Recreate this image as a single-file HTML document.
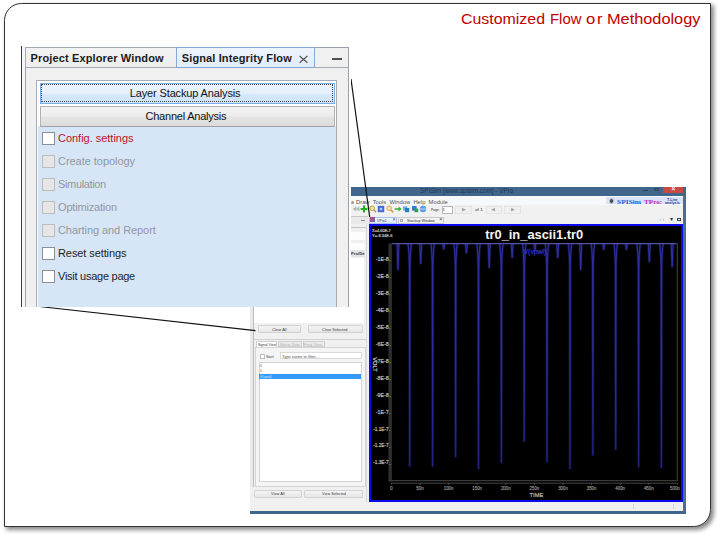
<!DOCTYPE html>
<html lang="en">
<head>
<meta charset="utf-8">
<title>Customized Flow or Methodology</title>
<style>
html,body{margin:0;padding:0;background:#fff;}
body{width:720px;height:536px;position:relative;overflow:hidden;font-family:"Liberation Sans",sans-serif;}
.abs{position:absolute;}
#frame{position:absolute;left:3.5px;top:2.8px;width:707.8px;height:524.4px;box-sizing:border-box;border:1.35px solid #333;border-radius:17.5px 0 17.5px 0;background:#fff;box-shadow:2.5px 2.5px 4px rgba(0,0,0,.46);}
#title{position:absolute;left:0;top:8.6px;width:720px;height:20px;font-size:15.1px;line-height:20px;color:#c00000;white-space:nowrap;}
#title span{position:absolute;top:0;transform-origin:0 0;}
/* ---------- screenshot window ---------- */
#shot{position:absolute;left:250px;top:187px;width:436px;height:326.6px;background:#f0f0f0;overflow:hidden;}
#shot .t{position:absolute;white-space:nowrap;line-height:1;}
/* ---------- swing panel ---------- */
#panel{position:absolute;left:21px;top:45.6px;width:330px;height:261px;background:#fff;overflow:hidden;}
#panel .lbl{position:absolute;left:37px;font-size:11px;line-height:13px;white-space:nowrap;color:#1e1e1e;}
#panel .cb{position:absolute;left:21px;width:13px;height:13px;box-sizing:border-box;border:1px solid #8e8f8f;background:#fff;}
#panel .cb.dis{border-color:#bcbcbc;background:#e6e6e6;}
#panel .dis{color:#92979f;}
.btn{position:absolute;left:18.5px;width:295px;box-sizing:border-box;border:1px solid #b2b2b2;border-bottom-color:#a0a0a0;background:linear-gradient(#f3f3f3,#ececec 48%,#e4e4e4 52%,#dcdcdc);font-size:11px;text-align:center;color:#111;white-space:nowrap;}
</style>
</head>
<body>
<div id="frame"></div>
<div id="title"><span style="left:461.2px;transform:translateY(-.5px) scaleX(1.054)">Customized</span> <span style="left:550px;transform:translateY(-.5px) scaleX(.985)">Flow</span> <span style="left:585.6px;letter-spacing:1.6px;transform:translateY(-.5px) scaleX(1.1)">or</span> <span style="left:607.3px;transform:translateY(-.5px) scaleX(1.081)">Methodology</span></div>

<div id="shot">
<div class="abs" style="left:0.0px;top:0.0px;width:436.0px;height:326.0px;background:#f0f0f0"></div>
<div class="abs" style="left:0.0px;top:0.0px;width:436.0px;height:9.4px;background:#41668c"></div>
<svg class="abs" style="left:169.5px;top:0.4px;overflow:visible" width="93.3" height="9.0"><text x="0" y="6.40" font-size="6.4" textLength="93.3" lengthAdjust="spacingAndGlyphs" fill="#213a56" >SPISim [www.spisim.com] - VPro</text></svg>
<div class="abs" style="left:413.2px;top:0.0px;width:20.3px;height:5.8px;background:#c84a45"></div>
<div class="t" style="left:421.4px;top:-1.4px;font-size:6.4px;color:#fff;font-weight:bold">×</div>
<div class="abs" style="left:393.0px;top:3.4px;width:4.6px;height:0.9px;background:#27405c"></div>
<div class="abs" style="left:404.2px;top:0.6px;width:5.0px;height:3.4px;border:0.7px solid #2d4866;box-sizing:border-box"></div>
<div class="abs" style="left:0.0px;top:9.4px;width:433.0px;height:8.3px;background:#f7f8f9"></div>
<svg class="abs" style="left:101.4px;top:10.8px;overflow:visible" width="2.8" height="8.0"><text x="0" y="5.70" font-size="5.7" textLength="2.8" lengthAdjust="spacingAndGlyphs" fill="#505050" >a</text></svg>
<svg class="abs" style="left:106.3px;top:10.8px;overflow:visible" width="91.7" height="8.0"><text x="0" y="5.70" font-size="5.7" textLength="91.7" lengthAdjust="spacingAndGlyphs" fill="#505050" xml:space="preserve">Draw&#160; Tools&#160; Window&#160; Help&#160; Module</text></svg>
<div class="abs" style="left:356.0px;top:10.3px;width:76.8px;height:7.2px;background:#dae3f8"></div>
<div class="abs" style="left:358.6px;top:11.1px;width:5.6px;height:5.6px;border-radius:50%;background:#4a5058;border:1px solid #c8ccd4;box-sizing:border-box"></div>
<svg class="abs" style="left:366.9px;top:9.8px;overflow:visible" width="24.1" height="9.2"><text x="0" y="6.60" font-size="6.6" textLength="24.1" lengthAdjust="spacingAndGlyphs" fill="#2f58d8" font-weight="bold" font-family="Liberation Serif, serif">SPISim</text></svg>
<svg class="abs" style="left:393.8px;top:9.7px;overflow:visible" width="18.2" height="9.5"><text x="0" y="6.80" font-size="6.8" textLength="18.2" lengthAdjust="spacingAndGlyphs" fill="#c31fb0" font-weight="bold" font-family="Liberation Serif, serif">TPro:</text></svg>
<svg class="abs" style="left:417.4px;top:10.1px;overflow:visible" width="10.6" height="4.9"><text x="0" y="3.50" font-size="3.5" textLength="10.6" lengthAdjust="spacingAndGlyphs" fill="#2a3a9a" font-weight="bold">T-Line</text></svg>
<svg class="abs" style="left:415.2px;top:13.3px;overflow:visible" width="14.8" height="4.9"><text x="0" y="3.50" font-size="3.5" textLength="14.8" lengthAdjust="spacingAndGlyphs" fill="#2a3a9a" font-weight="bold">analysis</text></svg>
<div class="abs" style="left:0.0px;top:17.7px;width:433.0px;height:11.0px;background:#f1f1f1"></div>
<svg class="abs" style="left:101.8px;top:18.3px" width="8" height="8" viewBox="0 0 8 8"><path d="M4.2 1.5 L.8 4 L4.2 6.5 Z M7.4 1.5 L4 4 L7.4 6.5 Z" fill="#a9bda9"/></svg>
<svg class="abs" style="left:109.8px;top:18.3px" width="8" height="8" viewBox="0 0 8 8"><path d="M3 .6 h2 v2.4 h2.4 v2 h-2.4 v2.4 h-2 v-2.4 h-2.4 v-2 h2.4 Z" fill="#1db31d"/></svg>
<svg class="abs" style="left:118.5px;top:18.3px" width="8" height="8" viewBox="0 0 8 8"><circle cx="3.2" cy="3.2" r="2.3" fill="#f0e6a8" stroke="#b89a30" stroke-width=".9"/><path d="M5 5 L7.2 7.2" stroke="#c8902a" stroke-width="1.3"/></svg>
<svg class="abs" style="left:126.8px;top:18.3px" width="8" height="8" viewBox="0 0 8 8"><rect x=".8" y=".8" width="6.4" height="6.4" fill="#3c6ad8"/><rect x="2.8" y="2.8" width="2.4" height="2.4" fill="#b8ccf4"/></svg>
<svg class="abs" style="left:135.5px;top:18.3px" width="8" height="8" viewBox="0 0 8 8"><circle cx="3.2" cy="3.2" r="2.3" fill="#f6e2c0" stroke="#e0a040" stroke-width=".9"/><path d="M5 5 L7.2 7.2" stroke="#d88a2a" stroke-width="1.3"/></svg>
<svg class="abs" style="left:143.5px;top:18.3px" width="8" height="8" viewBox="0 0 8 8"><path d="M.6 3.2 h4 v-1.6 L7.6 4 L4.6 6.4 v-1.6 h-4 Z" fill="#35b035"/></svg>
<svg class="abs" style="left:152.2px;top:18.3px" width="8" height="8" viewBox="0 0 8 8"><rect x="1" y="1.4" width="4.2" height="4.2" fill="#6ab0ec"/><rect x="3" y="3" width="4.2" height="4.2" fill="#2a78d0"/></svg>
<svg class="abs" style="left:160.5px;top:18.3px" width="8" height="8" viewBox="0 0 8 8"><rect x="1" y="1" width="4.6" height="4.6" fill="#3a78c8"/><rect x="3.4" y="3.6" width="3.8" height="3.6" fill="#2aa05a"/></svg>
<svg class="abs" style="left:169.0px;top:18.3px" width="8" height="8" viewBox="0 0 8 8"><circle cx="4" cy="4" r="3.2" fill="#5a9ce0"/><path d="M1 4 h6" stroke="#d8e8f8" stroke-width=".8"/></svg>
<svg class="abs" style="left:181.0px;top:19.8px;overflow:visible" width="8.3" height="5.9"><text x="0" y="4.20" font-size="4.2" textLength="8.3" lengthAdjust="spacingAndGlyphs" fill="#222" >Page:</text></svg>
<div class="abs" style="left:191.5px;top:18.6px;width:11.0px;height:8.2px;background:#fff;border:.6px solid #b8b8b8;box-sizing:border-box"></div>
<div class="t" style="left:192.6px;top:20.8px;font-size:4.4px;color:#333;">1</div>
<div class="abs" style="left:205.0px;top:18.6px;width:17.0px;height:8.2px;background:#f0f0f0;border:.5px solid #e4e4e4;box-sizing:border-box"></div>
<div class="t" style="left:211.5px;top:20.5px;font-size:4.6px;color:#a4a4a4;">▶</div>
<svg class="abs" style="left:225.0px;top:19.9px;overflow:visible" width="7.7" height="6.0"><text x="0" y="4.30" font-size="4.3" textLength="7.7" lengthAdjust="spacingAndGlyphs" fill="#333" >of 1</text></svg>
<div class="abs" style="left:235.5px;top:18.6px;width:16.0px;height:8.2px;background:#f0f0f0;border:.5px solid #e4e4e4;box-sizing:border-box"></div>
<div class="t" style="left:240.8px;top:20.5px;font-size:4.6px;color:#a4a4a4;">◀</div>
<div class="abs" style="left:254.0px;top:18.6px;width:17.0px;height:8.2px;background:#f0f0f0;border:.5px solid #e4e4e4;box-sizing:border-box"></div>
<div class="t" style="left:260.5px;top:20.5px;font-size:4.6px;color:#a4a4a4;">▶</div>
<div class="abs" style="left:0.0px;top:28.7px;width:433.0px;height:8.0px;background:#f0f0f0"></div>
<div class="abs" style="left:101.0px;top:29.2px;width:16.5px;height:7.0px;background:#e9e9e9;border-top:.6px solid #c8c8c8"></div>
<div class="abs" style="left:111.2px;top:33.0px;width:3.6px;height:0.7px;background:#909090"></div>
<div class="abs" style="left:119.2px;top:29.6px;width:28.2px;height:7.0px;background:linear-gradient(#f2f7fd,#dbe8f8);border:.6px solid #a9c4e4;box-sizing:border-box"></div>
<div class="abs" style="left:120.3px;top:30.2px;width:4.8px;height:4.8px;background:linear-gradient(135deg,#d04860,#5a70d0)"></div>
<svg class="abs" style="left:127.0px;top:30.5px;overflow:visible" width="9.7" height="6.0"><text x="0" y="4.30" font-size="4.3" textLength="9.7" lengthAdjust="spacingAndGlyphs" fill="#3a3a3a" >VPro1</text></svg>
<div class="t" style="left:142.6px;top:30.4px;font-size:5.2px;color:#444;">×</div>
<div class="abs" style="left:147.6px;top:29.6px;width:46.4px;height:7.0px;background:#f3f3f3;border:.6px solid #c9c9c9;box-sizing:border-box"></div>
<div class="abs" style="left:149.6px;top:31.6px;width:3.0px;height:3.0px;border:.6px solid #aaa;box-sizing:border-box"></div>
<svg class="abs" style="left:156.8px;top:30.5px;overflow:visible" width="27.8" height="6.0"><text x="0" y="4.30" font-size="4.3" textLength="27.8" lengthAdjust="spacingAndGlyphs" fill="#2e2e2e" >Stackup Window</text></svg>
<div class="t" style="left:189.2px;top:30.4px;font-size:5.2px;color:#444;">×</div>
<div class="t" style="left:409.5px;top:30.2px;font-size:5px;color:#aaa;">‹ ›</div>
<div class="t" style="left:420.4px;top:29.6px;font-size:5.6px;color:#333;">▾</div>
<div class="abs" style="left:426.6px;top:30.8px;width:4.4px;height:3.4px;border:.6px solid #444;border-top-width:1.2px;box-sizing:border-box"></div>
<div class="abs" style="left:0.0px;top:36.5px;width:118.5px;height:279.0px;background:#f0f0f0"></div>
<div class="abs" style="left:0.0px;top:36.5px;width:4.4px;height:263.0px;background:#e9e9e9"></div>
<div class="abs" style="left:3.4px;top:36.5px;width:1.0px;height:263.0px;background:#bcbcbc"></div>
<div class="abs" style="left:101.0px;top:39.6px;width:16.0px;height:0.7px;background:#c4c4c4"></div>
<div class="abs" style="left:101.0px;top:45.0px;width:14.0px;height:8.0px;background:#fdfdfd"></div>
<div class="abs" style="left:101.0px;top:56.0px;width:14.0px;height:7.4px;background:#fdfdfd"></div>
<div class="abs" style="left:101.0px;top:63.4px;width:14.0px;height:6.2px;background:#e3e3e3"></div>
<svg class="abs" style="left:101.0px;top:63.9px;overflow:visible" width="13.5" height="6.2"><text x="0" y="4.40" font-size="4.4" textLength="13.5" lengthAdjust="spacingAndGlyphs" fill="#333" font-weight="bold">Pro/De</text></svg>
<div class="abs" style="left:4.4px;top:71.0px;width:109.6px;height:65.3px;background:#fff"></div>
<div class="abs" style="left:116.2px;top:37.0px;width:1.0px;height:278.0px;background:#d9d9d9"></div>
<div class="abs" style="left:8.3px;top:138.3px;width:42.5px;height:7.6px;background:linear-gradient(#f4f4f4,#e6e6e6);border:.7px solid #d2d2d2;box-sizing:border-box;border-radius:1px"></div>
<svg class="abs" style="left:22.0px;top:139.7px;overflow:visible" width="14.6" height="6.0"><text x="0" y="4.30" font-size="4.3" textLength="14.6" lengthAdjust="spacingAndGlyphs" fill="#3a3a3a" >Clear All</text></svg>
<div class="abs" style="left:58.0px;top:138.3px;width:55.0px;height:7.6px;background:linear-gradient(#f4f4f4,#e6e6e6);border:.7px solid #d2d2d2;box-sizing:border-box;border-radius:1px"></div>
<svg class="abs" style="left:72.3px;top:139.7px;overflow:visible" width="25.5" height="6.0"><text x="0" y="4.30" font-size="4.3" textLength="25.5" lengthAdjust="spacingAndGlyphs" fill="#3a3a3a" >Clear Selected</text></svg>
<div class="abs" style="left:4.0px;top:151.6px;width:113.0px;height:0.8px;background:#cfcfcf"></div>
<div class="abs" style="left:5.6px;top:153.6px;width:21.6px;height:7.0px;background:#fff;border:.6px solid #d0d0d0;border-bottom:0;box-sizing:border-box"></div>
<svg class="abs" style="left:7.6px;top:154.5px;overflow:visible" width="18.0" height="5.5"><text x="0" y="3.90" font-size="3.9" textLength="18.0" lengthAdjust="spacingAndGlyphs" fill="#333" >Signal View</text></svg>
<div class="abs" style="left:27.8px;top:154.2px;width:24.4px;height:6.0px;background:#eaeaea;border:.6px solid #d0d0d0;box-sizing:border-box"></div>
<svg class="abs" style="left:30.2px;top:154.7px;overflow:visible" width="19.8" height="5.5"><text x="0" y="3.90" font-size="3.9" textLength="19.8" lengthAdjust="spacingAndGlyphs" fill="#b4b4b4" >Matrix View</text></svg>
<div class="abs" style="left:52.6px;top:154.2px;width:22.0px;height:6.0px;background:#eaeaea;border:.6px solid #d0d0d0;box-sizing:border-box"></div>
<svg class="abs" style="left:54.0px;top:154.7px;overflow:visible" width="18.0" height="5.5"><text x="0" y="3.90" font-size="3.9" textLength="18.0" lengthAdjust="spacingAndGlyphs" fill="#b4b4b4" >Freq. View</text></svg>
<div class="abs" style="left:4.6px;top:160.2px;width:111.6px;height:139.6px;background:#f4f4f4;border:.7px solid #d4d4d4;box-sizing:border-box"></div>
<div class="abs" style="left:10.0px;top:167.0px;width:5.2px;height:5.2px;background:#fff;border:.6px solid #bdbdbd;box-sizing:border-box"></div>
<svg class="abs" style="left:16.0px;top:167.1px;overflow:visible" width="7.7" height="6.0"><text x="0" y="4.30" font-size="4.3" textLength="7.7" lengthAdjust="spacingAndGlyphs" fill="#444" >Sort</text></svg>
<div class="abs" style="left:30.0px;top:165.4px;width:81.5px;height:6.8px;background:#fff;border:.6px solid #dadada;box-sizing:border-box"></div>
<svg class="abs" style="left:31.6px;top:166.5px;overflow:visible" width="36.9" height="5.9"><text x="0" y="4.20" font-size="4.2" textLength="36.9" lengthAdjust="spacingAndGlyphs" fill="#555" >Type name to filter...</text></svg>
<div class="abs" style="left:8.6px;top:175.2px;width:103.2px;height:120.2px;background:#fff;border:.7px solid #d4d4d4;box-sizing:border-box"></div>
<div class="t" style="left:9.8px;top:176.6px;font-size:4.2px;color:#666;">0</div>
<div class="t" style="left:9.8px;top:182.0px;font-size:4.2px;color:#666;">1</div>
<div class="abs" style="left:9.2px;top:186.9px;width:102.0px;height:5.6px;background:#3399ff"></div>
<svg class="abs" style="left:9.6px;top:187.1px;overflow:visible" width="11.8" height="5.9"><text x="0" y="4.20" font-size="4.2" textLength="11.8" lengthAdjust="spacingAndGlyphs" fill="#d4e8ff" >V(vpwl)</text></svg>
<div class="abs" style="left:4.2px;top:303.0px;width:47.6px;height:7.5px;background:linear-gradient(#f4f4f4,#e6e6e6);border:.7px solid #d2d2d2;box-sizing:border-box;border-radius:1px"></div>
<svg class="abs" style="left:21.3px;top:304.4px;overflow:visible" width="13.7" height="6.0"><text x="0" y="4.30" font-size="4.3" textLength="13.7" lengthAdjust="spacingAndGlyphs" fill="#3a3a3a" >View All</text></svg>
<div class="abs" style="left:54.2px;top:303.0px;width:58.8px;height:7.5px;background:linear-gradient(#f4f4f4,#e6e6e6);border:.7px solid #d2d2d2;box-sizing:border-box;border-radius:1px"></div>
<svg class="abs" style="left:71.8px;top:304.4px;overflow:visible" width="23.9" height="6.0"><text x="0" y="4.30" font-size="4.3" textLength="23.9" lengthAdjust="spacingAndGlyphs" fill="#3a3a3a" >View Selected</text></svg>
<div class="abs" style="left:118.6px;top:36.6px;width:314.0px;height:278.6px;background:#000;border:2px solid #0a0aee;box-sizing:border-box"></div>
<svg class="abs" style="left:118.6px;top:36.6px" width="314" height="278.6" viewBox="368.6 223.6 314 278.6" font-family="Liberation Sans, sans-serif">
<g fill="none">
<rect x="388" y="243" width="3.5" height="238" fill="#2e2e2e"/>
<path d="M388.4 480.3 H676.9 V243" stroke="#3a3a3a" stroke-width="1.2"/>
<path d="M391 482.8 H676.5" stroke="#4c4c4c" stroke-width=".9"/>
</g>
<path d="M391.5 243.2 H676.4" stroke="#55559c" stroke-width="1.2" fill="none"/>
<defs><filter id="bl" x="-5%" y="-5%" width="110%" height="110%"><feGaussianBlur stdDeviation="0.75"/></filter></defs>
<defs><linearGradient id="sg" gradientUnits="userSpaceOnUse" x1="0" y1="243" x2="0" y2="470"><stop offset="0" stop-color="#4040e0"/><stop offset=".5" stop-color="#3c3cd8"/><stop offset="1" stop-color="#3030b0"/></linearGradient></defs>
<defs><path id="spk" d="M407.6 243.6 C408.30 248 408.70 254 409.00 266 L409.20 465.5 L409.40 465.5 L409.60 266 C409.90 254 410.30 248 411.0 243.6 M430.5 243.6 C431.20 248 431.60 254 431.90 266 L432.10 465.5 L432.30 465.5 L432.50 266 C432.80 254 433.20 248 433.9 243.6 M453.5 243.6 C454.20 248 454.60 254 454.90 266 L455.10 456.0 L455.30 456.0 L455.50 266 C455.80 254 456.20 248 456.9 243.6 M476.4 243.6 C477.10 248 477.50 254 477.80 266 L478.00 468.0 L478.20 468.0 L478.40 266 C478.70 254 479.10 248 479.8 243.6 M499.3 243.6 C500.00 248 500.40 254 500.70 266 L500.90 462.0 L501.10 462.0 L501.30 266 C501.60 254 502.00 248 502.7 243.6 M522.1 243.6 C522.80 248 523.20 254 523.50 266 L523.70 440.5 L523.90 440.5 L524.10 266 C524.40 254 524.80 248 525.5 243.6 M544.9 243.6 C545.60 248 546.00 254 546.30 266 L546.50 461.0 L546.70 461.0 L546.90 266 C547.20 254 547.60 248 548.3 243.6 M567.9 243.6 C568.60 248 569.00 254 569.30 266 L569.50 468.0 L569.70 468.0 L569.90 266 C570.20 254 570.60 248 571.3 243.6 M590.8 243.6 C591.50 248 591.90 254 592.20 266 L592.40 454.5 L592.60 454.5 L592.80 266 C593.10 254 593.50 248 594.2 243.6 M613.6 243.6 C614.30 248 614.70 254 615.00 266 L615.20 448.8 L615.40 448.8 L615.60 266 C615.90 254 616.30 248 617.0 243.6 M636.5 243.6 C637.20 248 637.60 254 637.90 266 L638.10 466.0 L638.30 466.0 L638.50 266 C638.80 254 639.20 248 639.9 243.6 M659.3 243.6 C660.00 248 660.40 254 660.70 266 L660.90 467.0 L661.10 467.0 L661.30 266 C661.60 254 662.00 248 662.7 243.6 M396.7 243.6 L397.50 269.0 L397.70 269.0 L398.5 243.6 M419.4 243.6 L420.20 263.0 L420.40 263.0 L421.2 243.6 M442.4 243.6 L443.20 248.7 L443.40 248.7 L444.2 243.6 M465.1 243.6 L465.90 252.4 L466.10 252.4 L466.9 243.6 M487.9 243.6 L488.70 267.0 L488.90 267.0 L489.7 243.6 M510.9 243.6 L511.70 257.0 L511.90 257.0 L512.7 243.6 M533.6 243.6 L534.40 250.0 L534.60 250.0 L535.4 243.6 M556.4 243.6 L557.20 257.0 L557.40 257.0 L558.2 243.6 M579.4 243.6 L580.20 269.0 L580.40 269.0 L581.2 243.6 M602.4 243.6 L603.20 249.0 L603.40 249.0 L604.2 243.6 M625.1 243.6 L625.90 249.0 L626.10 249.0 L626.9 243.6 M648.0 243.6 L648.80 261.0 L649.00 261.0 L649.8 243.6 M670.9 243.6 L671.70 266.0 L671.90 266.0 L672.7 243.6"/></defs>
<g fill="none" stroke="url(#sg)" stroke-linejoin="round" stroke-linecap="butt">
<use href="#spk" stroke-width="3.2" stroke-opacity=".10"/>
<use href="#spk" stroke-width="2.1" stroke-opacity=".22"/>
<use href="#spk" stroke-width="1.05" stroke-opacity=".6"/>
</g>
<g fill="#e0e0e0" stroke="#fff" stroke-opacity=".2" stroke-width=".6">
<text x="371.7" y="231.7" font-size="4" textLength="18.7" lengthAdjust="spacingAndGlyphs">X=4.60E-7</text>
<text x="371.7" y="236.7" font-size="4" textLength="20.3" lengthAdjust="spacingAndGlyphs">Y=-8.34E-6</text>
</g>
<text x="533.8" y="238.7" font-size="12.6" font-weight="bold" fill="#f4f4f4" textLength="98" lengthAdjust="spacingAndGlyphs" text-anchor="middle">tr0_in_ascii1.tr0</text>
<text x="534.5" y="253.8" font-size="7.4" fill="#3838dc" stroke="#3838dc" stroke-opacity=".35" stroke-width=".5" textLength="22.6" lengthAdjust="spacingAndGlyphs" text-anchor="middle">V(vpwl)</text>
<g fill="#c8c8c8" stroke="#fff" stroke-opacity=".22" stroke-width=".7" font-size="4.7" text-anchor="end">
<text x="388.2" y="260.4" textLength="12.8" lengthAdjust="spacingAndGlyphs">-1E-8</text>
<path d="M388.8 260.4 h1.4" stroke="#999" stroke-opacity="1" stroke-width=".6"/>
<text x="388.2" y="277.3" textLength="12.8" lengthAdjust="spacingAndGlyphs">-2E-8</text>
<path d="M388.8 277.3 h1.4" stroke="#999" stroke-opacity="1" stroke-width=".6"/>
<text x="388.2" y="294.3" textLength="12.8" lengthAdjust="spacingAndGlyphs">-3E-8</text>
<path d="M388.8 294.3 h1.4" stroke="#999" stroke-opacity="1" stroke-width=".6"/>
<text x="388.2" y="311.3" textLength="12.8" lengthAdjust="spacingAndGlyphs">-4E-8</text>
<path d="M388.8 311.3 h1.4" stroke="#999" stroke-opacity="1" stroke-width=".6"/>
<text x="388.2" y="328.3" textLength="12.8" lengthAdjust="spacingAndGlyphs">-5E-8</text>
<path d="M388.8 328.3 h1.4" stroke="#999" stroke-opacity="1" stroke-width=".6"/>
<text x="388.2" y="345.2" textLength="12.8" lengthAdjust="spacingAndGlyphs">-6E-8</text>
<path d="M388.8 345.2 h1.4" stroke="#999" stroke-opacity="1" stroke-width=".6"/>
<text x="388.2" y="362.2" textLength="12.8" lengthAdjust="spacingAndGlyphs">-7E-8</text>
<path d="M388.8 362.2 h1.4" stroke="#999" stroke-opacity="1" stroke-width=".6"/>
<text x="388.2" y="379.2" textLength="12.8" lengthAdjust="spacingAndGlyphs">-8E-8</text>
<path d="M388.8 379.2 h1.4" stroke="#999" stroke-opacity="1" stroke-width=".6"/>
<text x="388.2" y="396.2" textLength="12.8" lengthAdjust="spacingAndGlyphs">-9E-8</text>
<path d="M388.8 396.2 h1.4" stroke="#999" stroke-opacity="1" stroke-width=".6"/>
<text x="388.2" y="413.2" textLength="12.8" lengthAdjust="spacingAndGlyphs">-1E-7</text>
<path d="M388.8 413.2 h1.4" stroke="#999" stroke-opacity="1" stroke-width=".6"/>
<text x="388.2" y="430.2" textLength="15.4" lengthAdjust="spacingAndGlyphs">-1.1E-7</text>
<path d="M388.8 430.2 h1.4" stroke="#999" stroke-opacity="1" stroke-width=".6"/>
<text x="388.2" y="447.1" textLength="15.4" lengthAdjust="spacingAndGlyphs">-1.2E-7</text>
<path d="M388.8 447.1 h1.4" stroke="#999" stroke-opacity="1" stroke-width=".6"/>
<text x="388.2" y="464.1" textLength="15.4" lengthAdjust="spacingAndGlyphs">-1.3E-7</text>
<path d="M388.8 464.1 h1.4" stroke="#999" stroke-opacity="1" stroke-width=".6"/>
</g>
<g fill="#9c9c9c" stroke="#fff" stroke-opacity=".14" stroke-width=".7" font-size="4.7" text-anchor="middle">
<text x="391.0" y="489.4">0</text>
<path d="M391.0 483 v1.2" stroke="#999" stroke-opacity="1" stroke-width=".6"/>
<text x="419.6" y="489.4" textLength="7.5" lengthAdjust="spacingAndGlyphs">50n</text>
<path d="M419.6 483 v1.2" stroke="#999" stroke-opacity="1" stroke-width=".6"/>
<text x="448.2" y="489.4" textLength="9.7" lengthAdjust="spacingAndGlyphs">100n</text>
<path d="M448.2 483 v1.2" stroke="#999" stroke-opacity="1" stroke-width=".6"/>
<text x="476.8" y="489.4" textLength="9.7" lengthAdjust="spacingAndGlyphs">150n</text>
<path d="M476.8 483 v1.2" stroke="#999" stroke-opacity="1" stroke-width=".6"/>
<text x="505.4" y="489.4" textLength="9.7" lengthAdjust="spacingAndGlyphs">200n</text>
<path d="M505.4 483 v1.2" stroke="#999" stroke-opacity="1" stroke-width=".6"/>
<text x="534.0" y="489.4" textLength="9.7" lengthAdjust="spacingAndGlyphs">250n</text>
<path d="M534.0 483 v1.2" stroke="#999" stroke-opacity="1" stroke-width=".6"/>
<text x="562.6" y="489.4" textLength="9.7" lengthAdjust="spacingAndGlyphs">300n</text>
<path d="M562.6 483 v1.2" stroke="#999" stroke-opacity="1" stroke-width=".6"/>
<text x="591.2" y="489.4" textLength="9.7" lengthAdjust="spacingAndGlyphs">350n</text>
<path d="M591.2 483 v1.2" stroke="#999" stroke-opacity="1" stroke-width=".6"/>
<text x="619.8" y="489.4" textLength="9.7" lengthAdjust="spacingAndGlyphs">400n</text>
<path d="M619.8 483 v1.2" stroke="#999" stroke-opacity="1" stroke-width=".6"/>
<text x="648.4" y="489.4" textLength="9.7" lengthAdjust="spacingAndGlyphs">450n</text>
<path d="M648.4 483 v1.2" stroke="#999" stroke-opacity="1" stroke-width=".6"/>
<text x="674.5" y="489.4" textLength="9.7" lengthAdjust="spacingAndGlyphs">500n</text>
<path d="M677.0 483 v1.2" stroke="#999" stroke-opacity="1" stroke-width=".6"/>
</g>
<text x="536" y="496.8" font-size="5.2" fill="#c4c4c4" stroke="#fff" stroke-opacity=".2" stroke-width=".6" textLength="13.7" lengthAdjust="spacingAndGlyphs" text-anchor="middle">TIME</text>
<text transform="translate(372.8 364) rotate(90)" font-size="5.2" fill="#d0d0d0" stroke="#fff" stroke-opacity=".25" stroke-width=".6" textLength="14.4" lengthAdjust="spacingAndGlyphs" text-anchor="middle">VOLT</text>
</svg>
<div class="abs" style="left:0.0px;top:315.2px;width:433.0px;height:8.5px;background:#f0f0f0"></div>
<div class="abs" style="left:382.5px;top:317.0px;width:0.6px;height:5.0px;background:#d4d4d4"></div>
<div class="abs" style="left:422.6px;top:317.0px;width:0.6px;height:5.0px;background:#d4d4d4"></div>
<div class="abs" style="left:433.0px;top:9.0px;width:2.7px;height:318.0px;background:#4a6f96"></div>
<div class="abs" style="left:0.0px;top:323.6px;width:436.0px;height:3.0px;background:#41668c"></div>
</div>

<svg class="abs" style="left:0;top:0" width="720" height="536" viewBox="0 0 720 536">
  <line x1="351" y1="79" x2="369.7" y2="217" stroke="#111" stroke-width="1.2"/>
  <line x1="39.5" y1="306.5" x2="255.5" y2="330.7" stroke="#111" stroke-width="1.2"/>
</svg>

<div id="panel">
  <div class="abs" style="left:0;top:0;width:1.2px;height:261px;background:#1f426c"></div>
  <div class="abs" style="left:1.2px;top:0;width:3px;height:261px;background:#f6f6f6"></div>
  <div class="abs" style="left:4px;top:1.5px;width:324px;height:260px;background:#f0f0f0;border:1px solid #9aa0ab;border-bottom:0;box-sizing:border-box"></div>
  <!-- tabs -->
  <div class="abs tab" style="left:4px;top:1.5px;width:152px;height:21px;background:linear-gradient(#f3f3f3,#ededed);border:1px solid #a3a8b2;box-sizing:border-box"></div>
  <div class="abs tab" style="left:155px;top:1.5px;width:138.5px;height:21px;background:linear-gradient(#edf4fc,#e1edfa);border:1px solid #86a9d3;box-sizing:border-box"></div>
  <div class="abs" style="left:293.5px;top:21.5px;width:34px;height:1px;background:#a3a8b2"></div>
  <div class="abs" style="left:328px;top:0;width:2px;height:261px;background:#fff"></div>
  <div class="abs" style="left:9.6px;top:6.1px;font-size:11px;line-height:13px;font-weight:bold;color:#1b1b1b;white-space:nowrap;letter-spacing:.13px">Project Explorer Window</div>
  <div class="abs" style="left:160.8px;top:6.1px;font-size:11px;line-height:13px;font-weight:bold;color:#1b1b1b;white-space:nowrap;letter-spacing:.12px">Signal Integrity Flow</div>
  <svg class="abs" style="left:277.6px;top:9px" width="10" height="10" viewBox="0 0 10 10"><path d="M.6 1 L8.4 7.8 M8.4 1 L.6 7.8" stroke="#555" stroke-width="1.15" fill="none"/></svg>
  <div class="abs" style="left:311px;top:12.2px;width:10px;height:1.8px;background:#505050"></div>
  <!-- inner panel -->
  <div class="abs" style="left:15px;top:34px;width:301px;height:230px;background:#fff;border:1.2px solid #a5abb4;box-sizing:border-box"></div>
  <div class="abs" style="left:17px;top:80.5px;width:297.5px;height:190px;background:#d7e6f6"></div>
  <div class="btn" style="top:37px;height:21.2px;line-height:19px;border-color:#79b0ea;background:linear-gradient(#ecf4fc,#e3effb 50%,#d6e8fa 51%,#cfe3f8)"><span style="letter-spacing:-.14px;position:relative;left:-1.9px">Layer Stackup Analysis</span>
    <div class="abs" style="left:.8px;top:.8px;right:.8px;bottom:.8px;border:1px dotted #444"></div></div>
  <div class="btn" style="top:60.2px;height:20.8px;line-height:18.6px"><span style="letter-spacing:-.22px;position:relative;left:-1.1px">Channel Analysis</span></div>
  <div class="cb" style="top:86.8px"></div><div class="lbl" style="letter-spacing:-0.02px;top:86.3px;color:#c4102a;">Config. settings</div>
  <div class="cb dis" style="top:109.8px"></div><div class="lbl dis" style="letter-spacing:-0.04px;top:109.3px;">Create topology</div>
  <div class="cb dis" style="top:132.8px"></div><div class="lbl dis" style="letter-spacing:-0.35px;top:132.3px;">Simulation</div>
  <div class="cb dis" style="top:155.8px"></div><div class="lbl dis" style="letter-spacing:-0.18px;top:155.3px;">Optimization</div>
  <div class="cb dis" style="top:178.8px"></div><div class="lbl dis" style="letter-spacing:-0.07px;top:178.3px;">Charting and Report</div>
  <div class="cb" style="top:201.8px"></div><div class="lbl" style="letter-spacing:-0.09px;top:201.3px;">Reset settings</div>
  <div class="cb" style="top:224.8px"></div><div class="lbl" style="letter-spacing:-0.26px;top:224.3px;">Visit usage page</div>
</div>
</body>
</html>
